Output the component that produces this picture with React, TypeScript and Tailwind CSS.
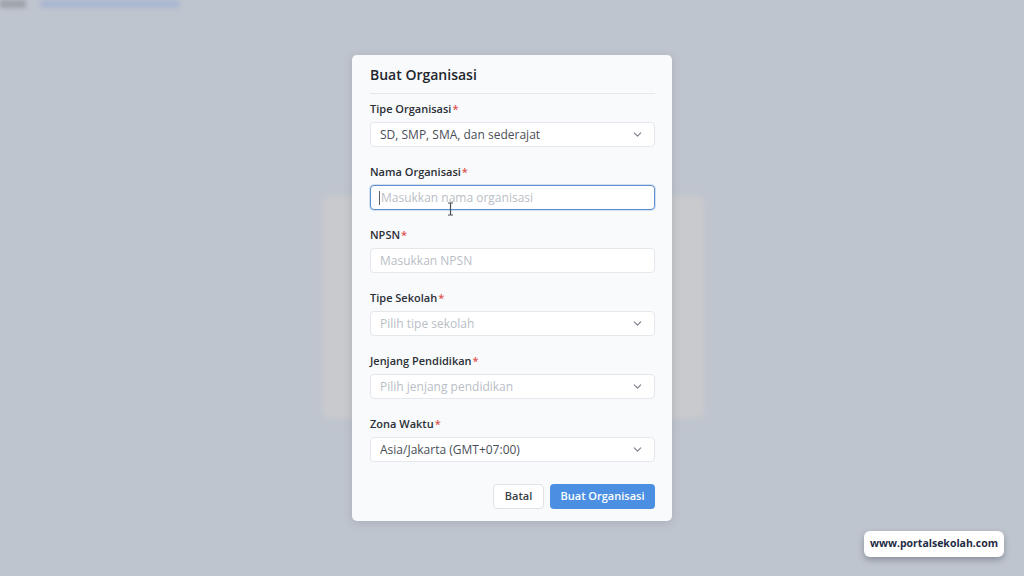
import { ChevronDown } from "lucide-react";

const font = { fontFamily: "'Open Sans', 'Noto Sans', sans-serif" };

type Field = {
  label: string;
  kind: "select" | "input";
  value?: string;
  placeholder?: string;
  focused?: boolean;
};

const fields: Field[] = [
  { label: "Tipe Organisasi", kind: "select", value: "SD, SMP, SMA, dan sederajat" },
  { label: "Nama Organisasi", kind: "input", placeholder: "Masukkan nama organisasi", focused: true },
  { label: "NPSN", kind: "input", placeholder: "Masukkan NPSN" },
  { label: "Tipe Sekolah", kind: "select", placeholder: "Pilih tipe sekolah" },
  { label: "Jenjang Pendidikan", kind: "select", placeholder: "Pilih jenjang pendidikan" },
  { label: "Zona Waktu", kind: "select", value: "Asia/Jakarta (GMT+07:00)" },
];

function FieldRow({ f }: { f: Field }) {
  return (
    <div className="flex flex-col">
      <label className="text-[11px] font-semibold text-[#2b2f36] leading-[14px] mb-[6px]">
        {f.label}
        <span className="text-[#e0524f] ml-[1px]">*</span>
      </label>
      <div
        className={
          f.focused
            ? "relative flex items-center h-[25px] rounded-[4px] border-[1.5px] border-[#5e8fd0] bg-white pl-[8px] pr-[10px] shadow-[0_0_0_1px_rgba(94,143,208,0.25)]"
            : "relative flex items-center h-[25px] rounded-[4px] border border-[#e4e7ec] bg-white pl-[9px] pr-[10px]"
        }
      >
        {f.focused && <span className="w-px h-[14px] bg-[#5a5f68] mr-px" />}
        <span
          className={
            f.value
              ? "flex-1 text-[12px] text-[#4a4f57] truncate"
              : "flex-1 text-[12px] text-[#b9bec6] truncate"
          }
        >
          {f.value ?? f.placeholder}
        </span>
        {f.kind === "select" && (
          <ChevronDown size={13} strokeWidth={2} className="text-[#7a7f88]" />
        )}
        {f.focused && (
          <svg
            className="absolute left-[76px] top-[16px]"
            width="7"
            height="14"
            viewBox="0 0 7 14"
          >
            <path d="M1 1h5M3.5 1v12M1 13h5" stroke="#4a4f57" strokeWidth="1.2" fill="none" />
          </svg>
        )}
      </div>
    </div>
  );
}

export default function App() {
  return (
    <div className="relative w-[1024px] h-[576px] overflow-hidden bg-[#bfc5ce]" style={font}>
      {/* blurred page behind overlay */}
      <div className="absolute left-0 top-0 flex items-center gap-[14px] blur-[2px]">
        <div className="w-[26px] h-[8px] bg-[#9ea3ab]" />
        <div className="w-[140px] h-[8px] bg-[#a9b6d2] rounded" />
      </div>
      <div className="absolute left-[322px] top-[196px] w-[382px] h-[222px] rounded-[6px] bg-[#c9cacd] blur-[3px]" />

      <div className="relative flex items-center justify-center w-full h-full">
        <div className="w-[320px] h-[466px] rounded-[5px] bg-[#f9fafc] shadow-[0_2px_10px_rgba(60,70,90,0.18)] pl-[18px] pr-[17px] pt-[10px] flex flex-col">
          <h2 className="text-[14px] font-semibold text-[#22262d] leading-[20px] pb-[8px] border-b border-[#e6e8ec]">
            Buat Organisasi
          </h2>
          <div className="flex flex-col gap-[18px] mt-[8px]">
            {fields.map((f) => (
              <FieldRow key={f.label} f={f} />
            ))}
          </div>
          <div className="flex justify-end gap-[6px] mt-[22px]">
            <button className="h-[25px] w-[51px] rounded-[4px] border border-[#dfe2e7] bg-white text-[11px] font-semibold text-[#3a3f47]">
              Batal
            </button>
            <button className="h-[25px] w-[105px] rounded-[4px] bg-[#4b8fe2] text-[11px] font-semibold text-white">
              Buat Organisasi
            </button>
          </div>
        </div>
      </div>

      <div className="absolute right-[20px] bottom-[19px] w-[140px] h-[26px] rounded-[6px] bg-white shadow-[0_3px_6px_rgba(40,50,70,0.35)] flex items-center justify-center">
        <span className="text-[10.5px] font-bold text-[#1f2b44]">www.portalsekolah.com</span>
      </div>
    </div>
  );
}
